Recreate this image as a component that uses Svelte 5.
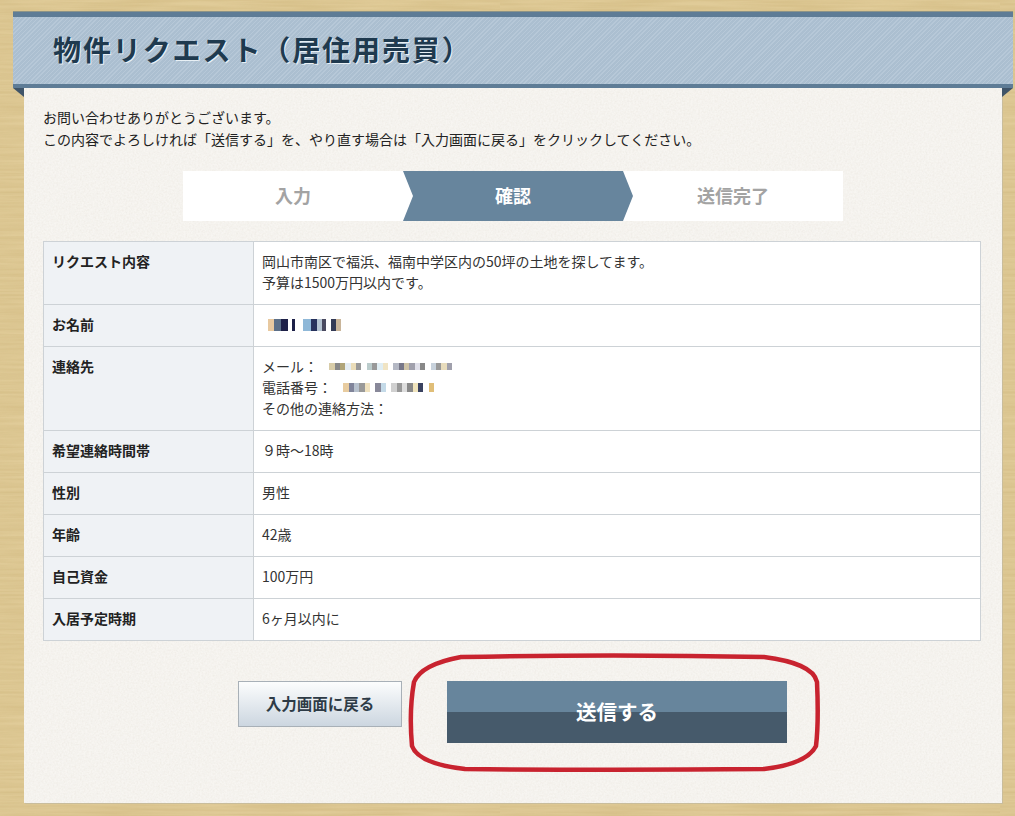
<script>
  const rows = [
    { h: 'リクエスト内容', lines: [['岡山市南区で福浜、福南中学区内の50坪の土地を探してます。'], ['予算は1500万円以内です。']] },
    { h: 'お名前', lines: [['', 'name']] },
    { h: '連絡先', lines: [['メール：', 'mail'], ['電話番号：', 'tel'], ['その他の連絡方法：']] },
    { h: '希望連絡時間帯', lines: [['９時～18時']] },
    { h: '性別', lines: [['男性']] },
    { h: '年齢', lines: [['42歳']] },
    { h: '自己資金', lines: [['100万円']] },
    { h: '入居予定時期', lines: [['6ヶ月以内に']] }
  ];

  const palette = {
    name: ['#e8c9a0', '#5b6f88', '#1d2048', '#fff', '#1d2048', '#fff', '#8fb8d8', '#27315c', '#b5c4d2', '#4a4a60', '#fff', '#333a55', '#c9b59a'],
    mail: ['#d8cca8', '#888', '#b0a478', '#e4ecf2', '#eadcb8', '#999', '#fff', '#bcc', '#999', '#e0eef4', '#f0e4c4', '#fff', '#b4b8c4', '#778', '#cfc4a8', '#a0a0ac', '#e0e0ea', '#888', '#fff', '#c8d2dc', '#999', '#e8dcbc', '#a0a0ac'],
    tel: ['#e8cca0', '#80849a', '#b8c2ce', '#999', '#f0e2c0', '#fff', '#889', '#c4dae8', '#fff', '#d0d0d0', '#999', '#ddd', '#888', '#f0e4bc', '#3a4260', '#fff', '#e0be78']
  };
  const widths = { name: [6, 7, 7, 4, 3, 8, 8, 6, 5, 4, 5, 5, 5], mail: 5, tel: 5 };
  const heights = { name: 12, mail: 7, tel: 9 };

  const cells = (k) =>
    palette[k].map((c, i) => ({
      c,
      w: Array.isArray(widths[k]) ? widths[k][i] : widths[k] + (i % 3 === 0 ? 1 : 0)
    }));
</script>

<div class="page">
  <h1 class="banner">物件リクエスト（居住用売買）</h1>
  <main class="card">
    <span class="fold left"></span>
    <span class="fold right"></span>
    <p class="intro">お問い合わせありがとうございます。<br />この内容でよろしければ「送信する」を、やり直す場合は「入力画面に戻る」をクリックしてください。</p>

    <ol class="steps">
      <li>入力</li>
      <li class="active">確認</li>
      <li class="last">送信完了</li>
    </ol>

    <table>
      <tbody>
        {#each rows as r}
          <tr>
            <th>{r.h}</th>
            <td>
              {#each r.lines as l}
                <div class="line">
                  {l[0]}
                  {#if l[1]}
                    <span class="mosaic {l[1]}">
                      {#each cells(l[1]) as m}
                        <i style="background:{m.c};width:{m.w}px;height:{heights[l[1]]}px"></i>
                      {/each}
                    </span>
                  {/if}
                </div>
              {/each}
            </td>
          </tr>
        {/each}
      </tbody>
    </table>

    <div class="actions">
      <button class="back" type="button">入力画面に戻る</button>
      <button class="send" type="button">送信する</button>
      <svg class="circle" viewBox="0 0 410 118" aria-hidden="true">
        <path d="M52 3 C150 1 260 1 355 3 C385 7 405 14 408 28 C409 50 409 75 407 92 C400 106 380 112 355 115 C260 116 150 116 56 115 C30 112 8 106 3 92 C1 70 2 45 5 28 C10 16 25 8 52 3 Z" />
      </svg>
    </div>
  </main>
</div>

<style>
  :global(body) {
    margin: 0;
    background: #e0cb98;
  }

  .page {
    height: 816px;
    box-sizing: border-box;
    padding: 12px 2px 0 13px;
    overflow: hidden;
    font-family: "Noto Sans CJK JP", "Liberation Sans", sans-serif;
    color: #222;
    background-color: #e0cb98;
    background-image: url("data:image/svg+xml,%3Csvg xmlns='http://www.w3.org/2000/svg' width='500' height='300'%3E%3Cfilter id='n'%3E%3CfeTurbulence type='fractalNoise' baseFrequency='0.012 0.35' numOctaves='3'/%3E%3CfeColorMatrix values='0 0 0 0 0.55 0 0 0 0 0.4 0 0 0 0 0.15 0 0 0 0.55 -0.12'/%3E%3C/filter%3E%3Crect width='500' height='300' filter='url(%23n)'/%3E%3C/svg%3E");
  }

  .banner {
    box-sizing: border-box;
    height: 76px;
    margin: 0;
    padding: 0 0 4px 40px;
    display: flex;
    align-items: center;
    font-size: 28px;
    font-weight: 700;
    letter-spacing: 1.9px;
    color: #1f3a4f;
    text-shadow: 1px 1px 0 #e8f0f5;
    background-color: #b1c4d5;
    background-image: repeating-linear-gradient(135deg, rgba(255, 255, 255, 0.07) 0 1px, rgba(80, 110, 135, 0.06) 1px 3px);
    border-top: 5px solid #5e7c96;
    border-bottom: 4px solid #5e7c96;
    box-shadow: 0 -1px 0 #8d9488;
  }

  .card {
    position: relative;
    box-sizing: border-box;
    height: 715px;
    margin: 0 11px;
    padding: 18px 21px 0 19px;
    background-color: #f7f5f1;
    background-image: url("data:image/svg+xml,%3Csvg xmlns='http://www.w3.org/2000/svg' width='300' height='300'%3E%3Cfilter id='n'%3E%3CfeTurbulence type='fractalNoise' baseFrequency='0.55' numOctaves='2'/%3E%3CfeColorMatrix values='0 0 0 0 0.55 0 0 0 0 0.5 0 0 0 0 0.42 0 0 0 0.25 -0.08'/%3E%3C/filter%3E%3Crect width='300' height='300' filter='url(%23n)'/%3E%3C/svg%3E");
    box-shadow: 1px 1px 0 #c9bd9c;
  }

  .fold {
    position: absolute;
    top: 0;
    width: 11px;
    height: 9px;
    background: #3f5468;
  }

  .fold.left {
    left: -11px;
    clip-path: polygon(0 0, 100% 0, 100% 100%);
  }

  .fold.right {
    right: -11px;
    clip-path: polygon(0 0, 100% 0, 0 100%);
  }

  .intro {
    margin: 0;
    font-size: 14px;
    line-height: 22px;
    color: #222;
  }

  .steps {
    display: flex;
    width: 660px;
    height: 50px;
    margin: 21px 0 20px 140px;
    padding: 0;
    list-style: none;
    background: #fff;
  }

  .steps li {
    flex: 0 0 220px;
    display: flex;
    align-items: center;
    justify-content: center;
    padding-bottom: 2px;
    box-sizing: border-box;
    font-size: 18px;
    font-weight: 700;
    color: #a3a3a3;
  }

  .steps li.active {
    position: relative;
    z-index: 1;
    flex: 0 0 230px;
    margin-right: -10px;
    padding-right: 10px;
    color: #fff;
    background: #67859d;
    clip-path: polygon(0 0, 220px 0, 100% 50%, 220px 100%, 0 100%, 10px 50%);
  }

  table {
    width: 938px;
    border-collapse: collapse;
    table-layout: fixed;
    background: #fff;
    line-height: 21px;
  }

  th,
  td {
    padding: 9px 8px 11px;
    border: 1px solid #cdd2d6;
    text-align: left;
    vertical-align: top;
    font-size: 14px;
  }

  th {
    width: 193px;
    background: #eff2f5;
    font-weight: 700;
    color: #222;
  }

  .line {
    height: 21px;
    white-space: nowrap;
    font-size: 14px;
    line-height: 21px;
    color: #333;
  }

  .mosaic {
    display: inline-flex;
    align-items: center;
    vertical-align: middle;
    margin-top: -3px;
    margin-left: 8px;
    filter: blur(0.7px);
  }

  .mosaic.name {
    margin-left: 6px;
  }

  .mosaic i {
    display: block;
  }

  .actions {
    position: relative;
    display: flex;
    align-items: flex-start;
    gap: 45px;
    padding: 40px 0 0 195px;
  }

  button {
    border: 0;
    padding: 0 0 2px;
    font-family: inherit;
    font-weight: 700;
  }

  .back {
    box-sizing: border-box;
    width: 164px;
    height: 46px;
    font-size: 15.5px;
    color: #2e3b46;
    background: linear-gradient(#fcfdfd, #ccd6e0);
    border: 1px solid #a8b0b7;
  }

  .send {
    width: 340px;
    height: 62px;
    font-size: 20.5px;
    color: #fff;
    background: linear-gradient(#67859c 0 31px, #465a6b 31px 100%);
  }

  .circle {
    position: absolute;
    left: 366px;
    top: 13px;
    width: 410px;
    height: 118px;
    overflow: visible;
  }

  .circle path {
    fill: none;
    stroke: #c8232f;
    stroke-width: 4.5;
  }
</style>
